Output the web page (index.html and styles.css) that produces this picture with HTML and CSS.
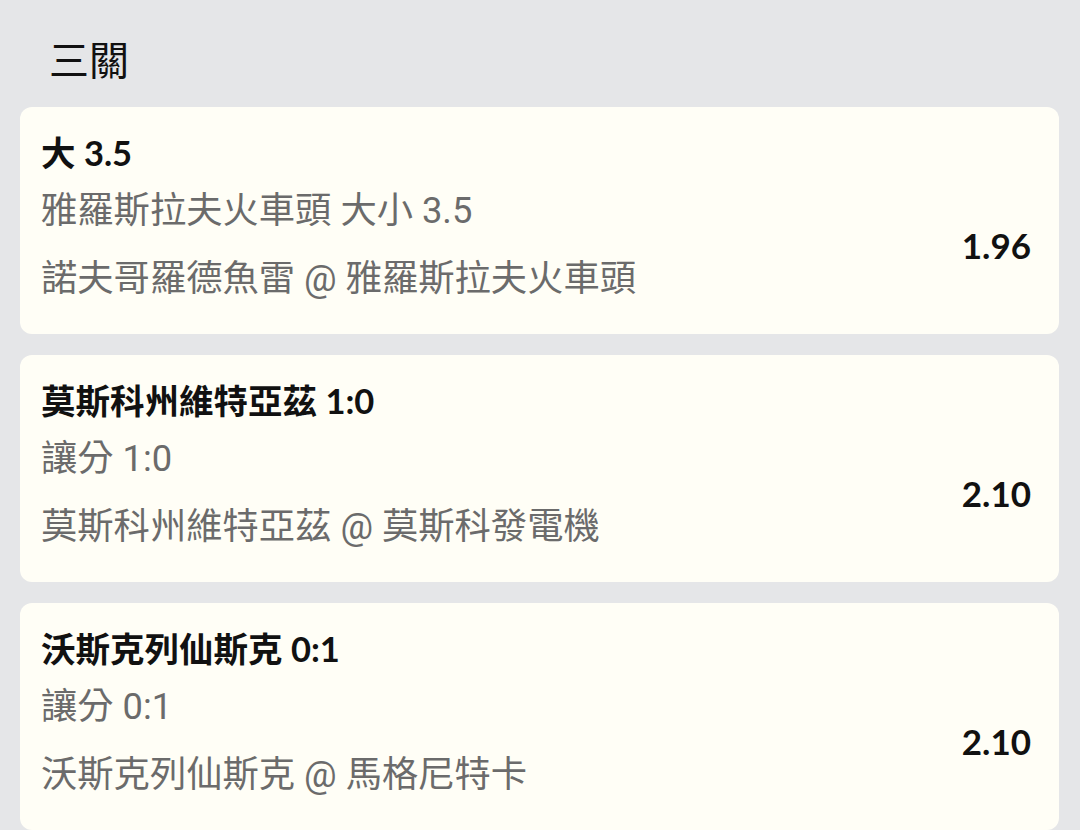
FILE: index.html
```html
<!DOCTYPE html>
<html lang="zh-Hant">
<head>
  <meta charset="UTF-8">
  <meta name="viewport" content="width=device-width, initial-scale=1.0">
  <title>三關</title>
  <link rel="stylesheet" href="styles.css">
</head>
<body>
  <h1 class="page-title">三關</h1>

  <div class="leg-list">
    <div class="leg-card">
      <div class="leg-pick">大 3.5</div>
      <div class="leg-body">
        <div class="leg-meta">
          <div class="leg-market">雅羅斯拉夫火車頭 大小 3.5</div>
          <div class="leg-match">諾夫哥羅德魚雷 @ 雅羅斯拉夫火車頭</div>
        </div>
        <div class="leg-odds">1.96</div>
      </div>
    </div>

    <div class="leg-card">
      <div class="leg-pick">莫斯科州維特亞茲 1:0</div>
      <div class="leg-body">
        <div class="leg-meta">
          <div class="leg-market">讓分 1:0</div>
          <div class="leg-match">莫斯科州維特亞茲 @ 莫斯科發電機</div>
        </div>
        <div class="leg-odds">2.10</div>
      </div>
    </div>

    <div class="leg-card">
      <div class="leg-pick">沃斯克列仙斯克 0:1</div>
      <div class="leg-body">
        <div class="leg-meta">
          <div class="leg-market">讓分 0:1</div>
          <div class="leg-match">沃斯克列仙斯克 @ 馬格尼特卡</div>
        </div>
        <div class="leg-odds">2.10</div>
      </div>
    </div>
  </div>
</body>
</html>
```

FILE: styles.css
```css
body {
  margin: 0;
  background-color: #e5e6e8;
  font-family: Lato, "Noto Sans CJK TC", sans-serif;
  color: #111;
}
.page-title {
  margin: 0;
  padding: 30px 0 0 49px;
  font-size: 40px;
  line-height: 56px;
  font-weight: 400;
  font-family: "Noto Sans CJK TC", sans-serif;
}
.leg-list {
  display: flex;
  flex-direction: column;
  gap: 21px;
  margin: 21px 21px 0 20px;
}
.leg-card {
  background-color: #fffef6;
  border-radius: 12px;
  padding: 22px 28px 31px 21px;
}
.leg-pick {
  font-size: 34.5px;
  line-height: 48px;
  font-weight: 700;
}
.leg-body {
  display: flex;
  align-items: center;
  justify-content: space-between;
  margin-top: 10px;
}
.leg-market,
.leg-match {
  font-family: Roboto, "Noto Sans CJK TC", sans-serif;
  font-size: 36.3px;
  line-height: 48px;
  color: #6b6b6b;
}
.leg-match {
  margin-top: 20px;
}
.leg-odds {
  font-size: 35px;
  font-weight: 700;
}
```
